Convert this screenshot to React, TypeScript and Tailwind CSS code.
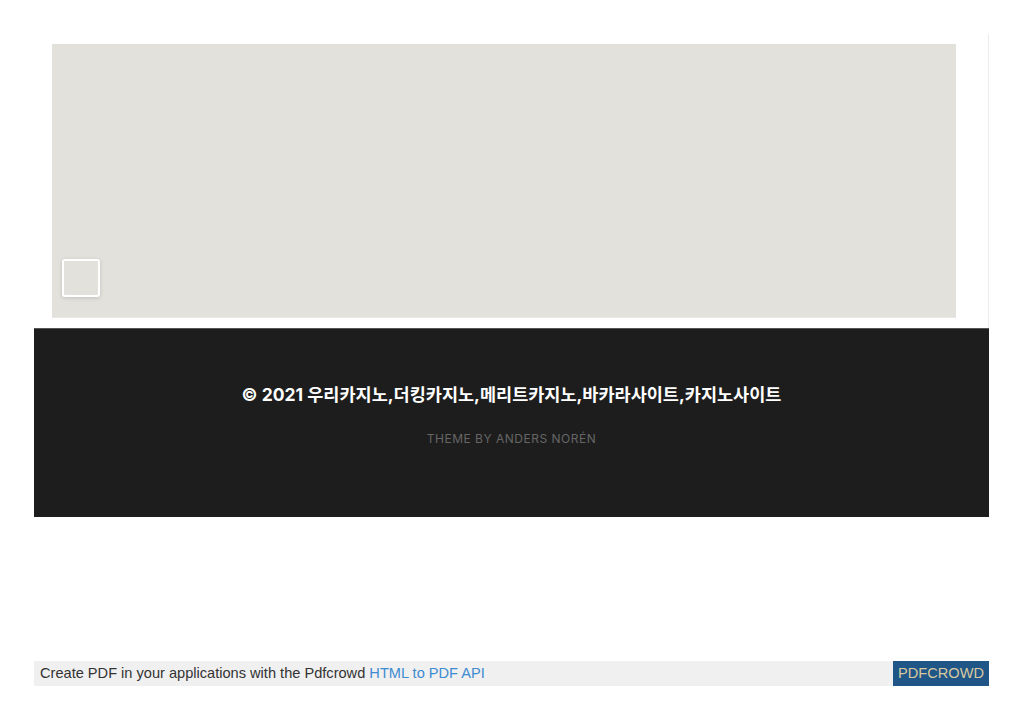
import React from "react";

export default function App() {
  return (
    <div className="w-[1023px] min-h-[724px] bg-white">
      <div className="pt-[34px] px-[34px]">
        <div className="border-r border-[#ececec] pt-[10px] pb-[10px] pl-[18px] pr-[32px]">
          <div className="relative h-[274px] bg-[#e2e1dc] border-b border-[#e9e8e4]">
            <div className="absolute left-[10px] bottom-[20px] w-[38px] h-[38px] rounded-[3px] border-2 border-white shadow-[0_1px_4px_rgba(0,0,0,0.15)]" />
          </div>
        </div>
        <footer className="h-[189px] bg-[#1d1d1d] border-t border-[#555] pt-[54px] text-center">
          <p
            className="text-white font-bold text-[17.5px] leading-[24px]"
            style={{ fontFamily: "Inter, 'Noto Sans CJK KR', sans-serif" }}
          >
            © 2021 우리카지노,더킹카지노,메리트카지노,바카라사이트,카지노사이트
          </p>
          <p
            className="mt-[24px] text-[#666] text-[12px] leading-[16px] uppercase tracking-[0.5px]"
            style={{ fontFamily: "Inter, 'Noto Sans', sans-serif" }}
          >
            Theme by Anders Norén
          </p>
        </footer>
      </div>
      <div className="h-[144px]" />
      <div
        className="mx-[34px] h-[25px] bg-[#f0f0f0] flex items-center justify-between text-[14.6px]"
        style={{ fontFamily: "'Liberation Sans', Arial, sans-serif" }}
      >
        <span className="pl-[6px] text-[#333]">
          Create PDF in your applications with the Pdfcrowd{" "}
          <span className="text-[#3d8bd0]">HTML to PDF API</span>
        </span>
        <span className="h-full px-[5px] flex items-center bg-[#1f5587] text-[#d8c9a0]">PDFCROWD</span>
      </div>
    </div>
  );
}
